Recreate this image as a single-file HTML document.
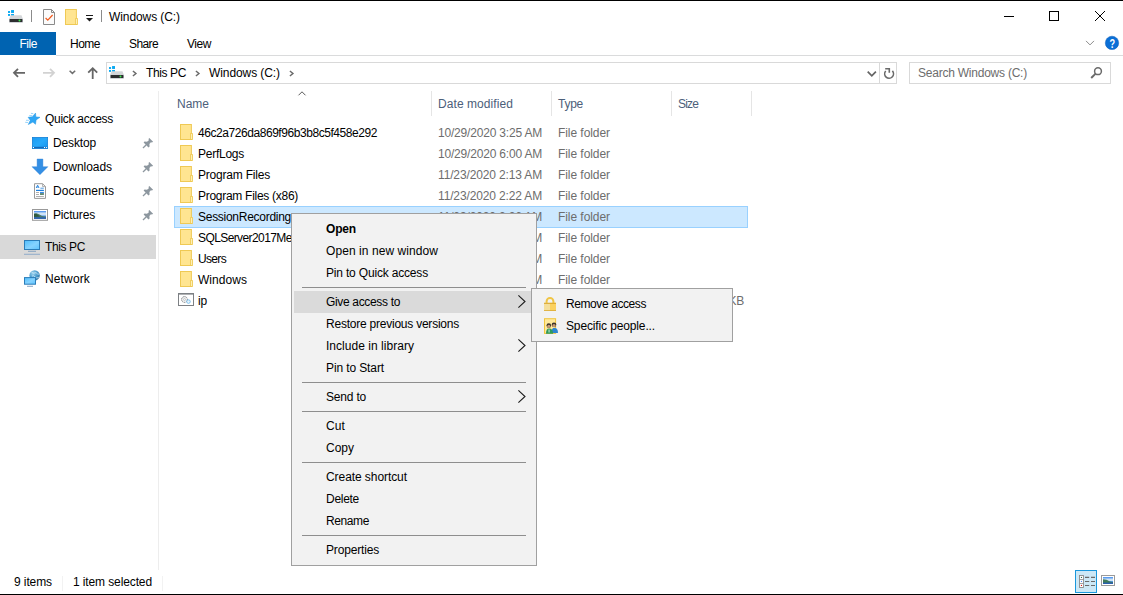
<!DOCTYPE html>
<html><head><meta charset="utf-8"><title>Windows (C:)</title>
<style>
html,body{margin:0;padding:0;}
body{width:1123px;height:595px;position:relative;overflow:hidden;background:#fff;font-family:"Liberation Sans",sans-serif;font-size:12px;}
.a{position:absolute;}
.t{position:absolute;white-space:nowrap;line-height:16px;height:16px;}
svg{position:absolute;overflow:visible;}
.hs{position:absolute;top:91px;width:1px;height:25px;background:#e5e5e5;}
.sep{position:absolute;left:302px;width:224px;height:1px;background:#8e8e8e;}
</style></head><body>
<!-- window frame lines -->
<div class="a" style="left:0;top:0;width:1123px;height:1px;background:#000;"></div>
<div class="a" style="left:0;top:594px;width:1123px;height:1px;background:#000;"></div>

<!-- title bar icons -->
<svg id="drive1" style="left:8px;top:9px" width="16" height="14" viewBox="0 0 16 14">
 <rect x="0" y="2.05" width="2.05" height="1.9" fill="#0aa9f2"/><rect x="3.05" y="1.05" width="2.95" height="2.9" fill="#0aa9f2"/>
 <rect x="0" y="5" width="2.05" height="1.9" fill="#0aa9f2"/><rect x="3.05" y="5" width="2.95" height="2.7" fill="#0aa9f2"/>
 <path d="M2.6 6.3 L13.5 6.3 L14.8 9.8 L1.2 9.8 Z" fill="#d4d6d9"/>
 <rect x="1" y="9.5" width="14" height="4.2" rx="0.8" fill="#c4c8ce"/>
 <rect x="1.6" y="9.9" width="12.8" height="3.1" rx="0.5" fill="#2c2d2f"/>
 <circle cx="11.5" cy="11.45" r="1" fill="#3dea4c"/>
</svg>
<div class="a" style="left:31px;top:10px;width:1px;height:12px;background:#8b8b8b;"></div>
<svg style="left:43px;top:9px" width="12" height="16" viewBox="0 0 12 16">
 <path d="M0.5 0.5 H8.5 L11.5 3.5 V15.5 H0.5 Z" fill="#fbfbfb" stroke="#8a8a8a" stroke-width="1"/>
 <path d="M8.5 0.5 V3.5 H11.5" fill="none" stroke="#8a8a8a" stroke-width="1"/>
 <path d="M2.6 9 L4.8 11.2 L9.6 6" fill="none" stroke="#f05a1e" stroke-width="1.2"/>
</svg>
<svg style="left:65px;top:9px" width="13" height="16" viewBox="0 0 13 16">
 <rect x="0" y="0" width="11.9" height="16" fill="#efc954"/><rect x="1" y="1" width="9.9" height="14" fill="#ffe591"/><rect x="10.1" y="8.9" width="2.85" height="7.1" rx="0.8" fill="#efc954"/><rect x="10.9" y="9.9" width="1.2" height="5.1" fill="#fff0b5"/>
</svg>
<div class="a" style="left:86px;top:15px;width:7px;height:1px;background:#1a1a1a;"></div>
<svg style="left:86px;top:18px" width="7" height="4" viewBox="0 0 7 4"><path d="M0 0 H7 L3.5 3.6 Z" fill="#1a1a1a"/></svg>
<div class="a" style="left:101px;top:10px;width:1px;height:12px;background:#8b8b8b;"></div>

<!-- window controls -->
<div class="a" style="left:1004px;top:16px;width:10px;height:1px;background:#000;"></div>
<div class="a" style="left:1049px;top:11px;width:8px;height:8px;border:1px solid #000;"></div>
<svg style="left:1095px;top:11px" width="10" height="10" viewBox="0 0 10 10"><path d="M0 0 L10 10 M10 0 L0 10" stroke="#000" stroke-width="1"/></svg>

<!-- ribbon -->
<div class="a" style="left:0;top:32px;width:56px;height:23px;background:#0063b1;"></div>
<div class="a" style="left:56px;top:55px;width:1067px;height:1px;background:#dadbdc;"></div>
<svg style="left:1086px;top:40px" width="9" height="6" viewBox="0 0 9 6"><path d="M0 0.9 L4 4.9 L8 0.9" fill="none" stroke="#8c8c8c" stroke-width="1"/></svg>
<svg style="left:1104px;top:35px" width="16" height="16" viewBox="0 0 16 16"><circle cx="8" cy="7.9" r="6.7" fill="#0b6fd6" stroke="#0a5cb8" stroke-width="0.5"/><text x="8.4" y="12.8" font-family="Liberation Sans, sans-serif" font-size="12.5" font-weight="bold" fill="#fff" text-anchor="middle" textLength="5.6" lengthAdjust="spacingAndGlyphs">?</text></svg>

<!-- nav buttons -->
<svg style="left:13px;top:68px" width="12" height="10" viewBox="0 0 12 10"><path d="M5 0.8 L1 4.8 L5 8.8 M1.2 4.8 H12" fill="none" stroke="#666666" stroke-width="1.8"/></svg>
<svg style="left:43px;top:68px" width="12" height="10" viewBox="0 0 12 10"><path d="M7 0.8 L11 4.8 L7 8.8 M10.8 4.8 H0" fill="none" stroke="#d2d2d2" stroke-width="1.8"/></svg>
<svg style="left:69px;top:70px" width="7" height="4" viewBox="0 0 7 4"><path d="M0.6 0.8 L3.4 3.4 L6.2 0.8" fill="none" stroke="#6f6f6f" stroke-width="1.5"/></svg>
<svg style="left:87px;top:67px" width="12" height="12" viewBox="0 0 12 12"><path d="M1.2 5.6 L5.7 1.2 L10.2 5.6 M5.7 1.4 V12" fill="none" stroke="#666666" stroke-width="1.8"/></svg>

<!-- address box -->
<div class="a" style="left:106px;top:62px;width:790px;height:21px;border:1px solid #d9d9d9;box-sizing:border-box;width:791px;height:22px;"></div>
<div class="a" style="left:879px;top:62px;width:1px;height:22px;background:#d9d9d9;"></div>
<svg style="left:109px;top:65px" width="16" height="14" viewBox="0 0 16 14">
 <rect x="0" y="2.05" width="2.05" height="1.9" fill="#0aa9f2"/><rect x="3.05" y="1.05" width="2.95" height="2.9" fill="#0aa9f2"/>
 <rect x="0" y="5" width="2.05" height="1.9" fill="#0aa9f2"/><rect x="3.05" y="5" width="2.95" height="2.7" fill="#0aa9f2"/>
 <path d="M2.6 6.3 L13.5 6.3 L14.8 9.8 L1.2 9.8 Z" fill="#d4d6d9"/>
 <rect x="1" y="9.5" width="14" height="4.2" rx="0.8" fill="#c4c8ce"/>
 <rect x="1.6" y="9.9" width="12.8" height="3.1" rx="0.5" fill="#2c2d2f"/>
 <circle cx="11.5" cy="11.45" r="1" fill="#3dea4c"/>
</svg>
<svg style="left:132px;top:70px" width="5" height="7" viewBox="0 0 5 7"><path d="M0.9 1.0 L3.9 3.5 L0.9 6.0" fill="none" stroke="#6a6a6a" stroke-width="1.5"/></svg>
<svg style="left:195px;top:70px" width="5" height="7" viewBox="0 0 5 7"><path d="M0.9 1.0 L3.9 3.5 L0.9 6.0" fill="none" stroke="#6a6a6a" stroke-width="1.5"/></svg>
<svg style="left:289px;top:70px" width="5" height="7" viewBox="0 0 5 7"><path d="M0.9 1.0 L3.9 3.5 L0.9 6.0" fill="none" stroke="#6a6a6a" stroke-width="1.5"/></svg>
<svg style="left:867px;top:71px" width="10" height="6" viewBox="0 0 10 6"><path d="M0.7 0.7 L4.8 4.9 L8.9 0.7" fill="none" stroke="#646464" stroke-width="1.7"/></svg>
<svg style="left:883px;top:67px" width="12" height="13" viewBox="0 0 12 13"><path d="M2.7 4.0 A4.4 4.4 0 1 0 9.4 3.9" fill="none" stroke="#6a6a6a" stroke-width="1.6"/><path d="M2.2 1.7 H6.3 V5.8" fill="none" stroke="#6a6a6a" stroke-width="1.6"/></svg>

<!-- search box -->
<div class="a" style="left:909px;top:62px;width:202px;height:22px;border:1px solid #d9d9d9;box-sizing:border-box;"></div>
<svg style="left:1090px;top:66px" width="13" height="13" viewBox="0 0 13 13"><circle cx="8" cy="5.2" r="3.4" fill="none" stroke="#6a6a6a" stroke-width="1.5"/><path d="M5.6 7.6 L1.2 12" stroke="#6a6a6a" stroke-width="2"/></svg>

<!-- nav pane -->
<div class="a" style="left:158px;top:91px;width:1px;height:479px;background:#ededed;"></div>
<div class="a" style="left:0;top:235px;width:156px;height:24px;background:#d9d9d9;"></div>
<!-- quick access star -->
<svg style="left:24px;top:112px" width="17" height="14" viewBox="0 0 17 14"><path d="M11.5 1.1 L11.9 4.9 L16 5.3 L12.1 7.9 L11.5 12.3 L8.9 10.1 L4.3 12.5 L6.3 8.3 L4.1 5.3 L8.5 4.7 Z" fill="#2ea6f5" stroke="#1f93e0" stroke-width="0.5"/><path d="M6.9 1.3 L9.3 1.7 M5.3 3.5 L8.5 3.7 M2 8.3 L4.9 8.3 M1.2 10.3 L4 10.5" stroke="#7cc8fa" stroke-width="0.8"/></svg>
<!-- desktop -->
<svg style="left:32px;top:137px" width="16" height="12" viewBox="0 0 16 12"><defs><linearGradient id="dg" x1="0" y1="0" x2="1" y2="1"><stop offset="0" stop-color="#1b9af2"/><stop offset="0.5" stop-color="#27a9fa"/><stop offset="1" stop-color="#1593ee"/></linearGradient></defs><rect x="0.4" y="0.4" width="15.2" height="11.2" fill="url(#dg)" stroke="#1580d6" stroke-width="0.8"/><rect x="0.8" y="9.8" width="14.4" height="1.4" fill="#1568b8"/><rect x="1" y="10" width="1" height="1" fill="#fff"/><rect x="12" y="10" width="1" height="1" fill="#fff"/><rect x="13.9" y="10" width="1" height="1" fill="#fff"/></svg>
<!-- downloads -->
<svg style="left:32px;top:159px" width="16" height="16" viewBox="0 0 16 16"><path d="M5.1 0 H10.9 V7.7 H15.9 L7.95 15.7 L0 7.7 H5.1 Z" fill="#348fe4" stroke="#2a7fd6" stroke-width="0.4"/></svg>
<!-- documents -->
<svg style="left:34px;top:183px" width="12" height="16" viewBox="0 0 12 16"><path d="M0.5 0.7 H8.6 L11.5 3.6 V15.4 H0.5 Z" fill="#fff" stroke="#999" stroke-width="1"/><path d="M8.6 0.7 V3.6 H11.5" fill="none" stroke="#999" stroke-width="0.8"/><path d="M2.2 5 L3.6 2.2 L5 5 M2.8 4 H4.4" fill="none" stroke="#1d7fdc" stroke-width="0.9"/><path d="M6.4 5.2 H9.8" stroke="#1d7fdc" stroke-width="0.8"/><path d="M2 7.4 H9.9" stroke="#1d7fdc" stroke-width="1.2"/><path d="M2 9.5 H5 M2 11.5 H5 M2 13.5 H9.9" stroke="#9a9a9a" stroke-width="0.8"/><rect x="6" y="8.9" width="3.9" height="1.4" fill="#3b8be8"/><rect x="6" y="10.3" width="3.9" height="1.5" fill="#3f6f52"/></svg>
<!-- pictures -->
<svg style="left:32px;top:209px" width="16" height="12" viewBox="0 0 16 12"><rect x="0.5" y="0.5" width="15" height="10.8" fill="#fff" stroke="#999" stroke-width="1"/><rect x="2" y="2" width="12" height="7.8" fill="#5b9bf0"/><rect x="2" y="3.4" width="12" height="3" fill="#cfe3f6"/><path d="M2 4.6 L4.5 4.2 L7 5.2 L10 7 L14 7.6 V9.8 H2 Z" fill="#4c7a66"/><path d="M2 5 L4 4.8 L6 6 L8 7.6 L2 8 Z" fill="#2f5a40"/><rect x="2" y="8.2" width="12" height="1.6" fill="#2c62b4"/></svg>
<!-- this pc -->
<svg style="left:24px;top:240px" width="16" height="15" viewBox="0 0 16 15"><defs><linearGradient id="pg" x1="0" y1="0" x2="1" y2="1"><stop offset="0" stop-color="#4fbdfc"/><stop offset="0.55" stop-color="#86d3ff"/><stop offset="1" stop-color="#5cc2fd"/></linearGradient></defs><rect x="0.5" y="0.5" width="15" height="9" fill="url(#pg)" stroke="#2b7db9" stroke-width="1"/><rect x="4" y="10.8" width="8" height="0.9" fill="#7b9cbd"/><rect x="0" y="13.8" width="16" height="0.9" fill="#86a6c8"/></svg>
<!-- network -->
<svg style="left:24px;top:270px" width="17" height="17" viewBox="0 0 17 17"><defs><radialGradient id="gg" cx="0.35" cy="0.3" r="0.8"><stop offset="0" stop-color="#9fd4ee"/><stop offset="0.5" stop-color="#4f9fcf"/><stop offset="1" stop-color="#2c6f9f"/></radialGradient></defs><circle cx="10.6" cy="5.4" r="5.2" fill="url(#gg)"/><path d="M7.5 2.2 Q9.5 4 12 2.6 Q13.5 4.5 15 4.2 M8 6 Q10 5 11 7 Q12.5 8.5 14.8 7.5" stroke="#cfeaf8" stroke-width="0.9" fill="none" opacity="0.85"/><rect x="0.5" y="7.6" width="11" height="6.6" fill="url(#pg)" stroke="#2b7db9" stroke-width="1"/><rect x="3" y="15.8" width="6" height="0.9" fill="#7b9cbd"/></svg>
<!-- pins -->
<svg class="pin" style="left:142px;top:137px" width="12" height="12" viewBox="0 0 12 12"><g transform="translate(0.7,0.9)"><path d="M6.6 0 L10.4 3.8 L9.3 4.7 L8.2 4.3 L6.7 6.2 L6.9 8.7 L5.8 9.5 L0.9 4.6 L1.8 3.6 L4.3 3.8 L6.2 2.3 L5.8 1 Z" fill="#8d979f"/><path d="M3.6 6.8 L0.3 10.1" stroke="#8d979f" stroke-width="1.3"/></g></svg>
<svg class="pin" style="left:142px;top:161px" width="12" height="12" viewBox="0 0 12 12"><g transform="translate(0.7,0.9)"><path d="M6.6 0 L10.4 3.8 L9.3 4.7 L8.2 4.3 L6.7 6.2 L6.9 8.7 L5.8 9.5 L0.9 4.6 L1.8 3.6 L4.3 3.8 L6.2 2.3 L5.8 1 Z" fill="#8d979f"/><path d="M3.6 6.8 L0.3 10.1" stroke="#8d979f" stroke-width="1.3"/></g></svg>
<svg class="pin" style="left:142px;top:185px" width="12" height="12" viewBox="0 0 12 12"><g transform="translate(0.7,0.9)"><path d="M6.6 0 L10.4 3.8 L9.3 4.7 L8.2 4.3 L6.7 6.2 L6.9 8.7 L5.8 9.5 L0.9 4.6 L1.8 3.6 L4.3 3.8 L6.2 2.3 L5.8 1 Z" fill="#8d979f"/><path d="M3.6 6.8 L0.3 10.1" stroke="#8d979f" stroke-width="1.3"/></g></svg>
<svg class="pin" style="left:142px;top:209px" width="12" height="12" viewBox="0 0 12 12"><g transform="translate(0.7,0.9)"><path d="M6.6 0 L10.4 3.8 L9.3 4.7 L8.2 4.3 L6.7 6.2 L6.9 8.7 L5.8 9.5 L0.9 4.6 L1.8 3.6 L4.3 3.8 L6.2 2.3 L5.8 1 Z" fill="#8d979f"/><path d="M3.6 6.8 L0.3 10.1" stroke="#8d979f" stroke-width="1.3"/></g></svg>

<!-- column headers -->
<div class="hs" style="left:431px"></div><div class="hs" style="left:551px"></div><div class="hs" style="left:671px"></div><div class="hs" style="left:751px"></div>
<svg style="left:298px;top:91px" width="8" height="5" viewBox="0 0 8 5"><path d="M0.5 4.3 L4 0.8 L7.5 4.3" fill="none" stroke="#5a5a5a" stroke-width="1"/></svg>

<!-- selected row -->
<div class="a" style="left:174px;top:206px;width:574px;height:22px;background:#cce8ff;border:1px solid #99d1ff;box-sizing:border-box;"></div>

<!-- folder icons -->
<svg style="left:180px;top:124px" width="13" height="16" viewBox="0 0 13 16"><rect x="0" y="0" width="11.9" height="16" fill="#efc954"/><rect x="1" y="1" width="9.9" height="14" fill="#ffe591"/><rect x="10.1" y="8.9" width="2.85" height="7.1" rx="0.8" fill="#efc954"/><rect x="10.9" y="9.9" width="1.2" height="5.1" fill="#fff0b5"/></svg>
<svg style="left:180px;top:145px" width="13" height="16" viewBox="0 0 13 16"><rect x="0" y="0" width="11.9" height="16" fill="#efc954"/><rect x="1" y="1" width="9.9" height="14" fill="#ffe591"/><rect x="10.1" y="8.9" width="2.85" height="7.1" rx="0.8" fill="#efc954"/><rect x="10.9" y="9.9" width="1.2" height="5.1" fill="#fff0b5"/></svg>
<svg style="left:180px;top:166px" width="13" height="16" viewBox="0 0 13 16"><rect x="0" y="0" width="11.9" height="16" fill="#efc954"/><rect x="1" y="1" width="9.9" height="14" fill="#ffe591"/><rect x="10.1" y="8.9" width="2.85" height="7.1" rx="0.8" fill="#efc954"/><rect x="10.9" y="9.9" width="1.2" height="5.1" fill="#fff0b5"/></svg>
<svg style="left:180px;top:187px" width="13" height="16" viewBox="0 0 13 16"><rect x="0" y="0" width="11.9" height="16" fill="#efc954"/><rect x="1" y="1" width="9.9" height="14" fill="#ffe591"/><rect x="10.1" y="8.9" width="2.85" height="7.1" rx="0.8" fill="#efc954"/><rect x="10.9" y="9.9" width="1.2" height="5.1" fill="#fff0b5"/></svg>
<svg style="left:180px;top:208px" width="13" height="16" viewBox="0 0 13 16"><rect x="0" y="0" width="11.9" height="16" fill="#efc954"/><rect x="1" y="1" width="9.9" height="14" fill="#ffe591"/><rect x="10.1" y="8.9" width="2.85" height="7.1" rx="0.8" fill="#efc954"/><rect x="10.9" y="9.9" width="1.2" height="5.1" fill="#fff0b5"/></svg>
<svg style="left:180px;top:229px" width="13" height="16" viewBox="0 0 13 16"><rect x="0" y="0" width="11.9" height="16" fill="#efc954"/><rect x="1" y="1" width="9.9" height="14" fill="#ffe591"/><rect x="10.1" y="8.9" width="2.85" height="7.1" rx="0.8" fill="#efc954"/><rect x="10.9" y="9.9" width="1.2" height="5.1" fill="#fff0b5"/></svg>
<svg style="left:180px;top:250px" width="13" height="16" viewBox="0 0 13 16"><rect x="0" y="0" width="11.9" height="16" fill="#efc954"/><rect x="1" y="1" width="9.9" height="14" fill="#ffe591"/><rect x="10.1" y="8.9" width="2.85" height="7.1" rx="0.8" fill="#efc954"/><rect x="10.9" y="9.9" width="1.2" height="5.1" fill="#fff0b5"/></svg>
<svg style="left:180px;top:271px" width="13" height="16" viewBox="0 0 13 16"><rect x="0" y="0" width="11.9" height="16" fill="#efc954"/><rect x="1" y="1" width="9.9" height="14" fill="#ffe591"/><rect x="10.1" y="8.9" width="2.85" height="7.1" rx="0.8" fill="#efc954"/><rect x="10.9" y="9.9" width="1.2" height="5.1" fill="#fff0b5"/></svg>
<svg style="left:178px;top:293px" width="16" height="13" viewBox="0 0 16 13"><rect x="0.5" y="0.5" width="15" height="12" fill="#fff" stroke="#7d8084" stroke-width="1"/><rect x="0.5" y="0.5" width="15" height="1.1" fill="#7d8084"/><circle cx="6.5" cy="6.5" r="2.9" fill="#f4f4f4" stroke="#74777a" stroke-width="1" stroke-dasharray="1.2 0.7"/><circle cx="6.5" cy="6.5" r="1" fill="none" stroke="#b0b3b6" stroke-width="0.6"/><circle cx="10.5" cy="8.6" r="1.8" fill="#e4f3fc" stroke="#6cb8ea" stroke-width="0.8"/></svg>

<span class="t" id="t0" style="left:109px;top:9px;color:#000;font-size:12px;letter-spacing:-0.085px;">Windows (C:)</span>
<span class="t" id="t1" style="left:19.5px;top:36px;color:#fff;font-size:12px;letter-spacing:-0.461px;">File</span>
<span class="t" id="t2" style="left:70px;top:36px;color:#000;font-size:12px;letter-spacing:-0.504px;">Home</span>
<span class="t" id="t3" style="left:129px;top:36px;color:#000;font-size:12px;letter-spacing:-0.606px;">Share</span>
<span class="t" id="t4" style="left:187px;top:36px;color:#000;font-size:12px;letter-spacing:-0.449px;">View</span>
<span class="t" id="t5" style="left:146px;top:65px;color:#000;font-size:12px;letter-spacing:-0.384px;">This PC</span>
<span class="t" id="t6" style="left:209px;top:65px;color:#000;font-size:12px;letter-spacing:-0.085px;">Windows (C:)</span>
<span class="t" id="t7" style="left:918px;top:65px;color:#6d6d6d;font-size:12px;letter-spacing:-0.230px;">Search Windows (C:)</span>
<span class="t" id="t8" style="left:45px;top:111px;color:#000;font-size:12px;letter-spacing:-0.280px;">Quick access</span>
<span class="t" id="t9" style="left:53px;top:135px;color:#000;font-size:12px;letter-spacing:-0.147px;">Desktop</span>
<span class="t" id="t10" style="left:53px;top:159px;color:#000;font-size:12px;letter-spacing:-0.042px;">Downloads</span>
<span class="t" id="t11" style="left:53px;top:183px;color:#000;font-size:12px;letter-spacing:0.033px;">Documents</span>
<span class="t" id="t12" style="left:53px;top:207px;color:#000;font-size:12px;letter-spacing:-0.170px;">Pictures</span>
<span class="t" id="t13" style="left:45px;top:239px;color:#000;font-size:12px;letter-spacing:-0.384px;">This PC</span>
<span class="t" id="t14" style="left:45px;top:271px;color:#000;font-size:12px;letter-spacing:0.141px;">Network</span>
<span class="t" id="t15" style="left:177px;top:96px;color:#4c607a;font-size:12px;letter-spacing:-0.004px;">Name</span>
<span class="t" id="t16" style="left:438px;top:96px;color:#4c607a;font-size:12px;letter-spacing:0.073px;">Date modified</span>
<span class="t" id="t17" style="left:558px;top:96px;color:#4c607a;font-size:12px;letter-spacing:-0.254px;">Type</span>
<span class="t" id="t18" style="left:678px;top:96px;color:#4c607a;font-size:12px;letter-spacing:-0.836px;">Size</span>
<span class="t" id="t19" style="left:198px;top:125px;color:#000;font-size:12px;letter-spacing:-0.440px;">46c2a726da869f96b3b8c5f458e292</span>
<span class="t" id="t20" style="left:438px;top:125px;color:#6d6d6d;font-size:12px;letter-spacing:-0.190px;">10/29/2020 3:25 AM</span>
<span class="t" id="t21" style="left:558px;top:125px;color:#6d6d6d;font-size:12px;letter-spacing:-0.062px;">File folder</span>
<span class="t" id="t22" style="left:198px;top:146px;color:#000;font-size:12px;letter-spacing:-0.254px;">PerfLogs</span>
<span class="t" id="t23" style="left:438px;top:146px;color:#6d6d6d;font-size:12px;letter-spacing:-0.190px;">10/29/2020 6:00 AM</span>
<span class="t" id="t24" style="left:558px;top:146px;color:#6d6d6d;font-size:12px;letter-spacing:-0.062px;">File folder</span>
<span class="t" id="t25" style="left:198px;top:167px;color:#000;font-size:12px;letter-spacing:-0.207px;">Program Files</span>
<span class="t" id="t26" style="left:438px;top:167px;color:#6d6d6d;font-size:12px;letter-spacing:-0.141px;">11/23/2020 2:13 AM</span>
<span class="t" id="t27" style="left:558px;top:167px;color:#6d6d6d;font-size:12px;letter-spacing:-0.062px;">File folder</span>
<span class="t" id="t28" style="left:198px;top:188px;color:#000;font-size:12px;letter-spacing:-0.282px;">Program Files (x86)</span>
<span class="t" id="t29" style="left:438px;top:188px;color:#6d6d6d;font-size:12px;letter-spacing:-0.141px;">11/23/2020 2:22 AM</span>
<span class="t" id="t30" style="left:558px;top:188px;color:#6d6d6d;font-size:12px;letter-spacing:-0.062px;">File folder</span>
<span class="t" id="t31" style="left:198px;top:209px;color:#000;font-size:12px;letter-spacing:-0.274px;">SessionRecording</span>
<span class="t" id="t32" style="left:438px;top:209px;color:#6d6d6d;font-size:12px;letter-spacing:-0.141px;">11/23/2020 2:26 AM</span>
<span class="t" id="t33" style="left:558px;top:209px;color:#6d6d6d;font-size:12px;letter-spacing:-0.062px;">File folder</span>
<span class="t" id="t34" style="left:198px;top:230px;color:#000;font-size:12px;letter-spacing:-0.596px;">SQLServer2017Media</span>
<span class="t" id="t35" style="left:438px;top:230px;color:#6d6d6d;font-size:12px;letter-spacing:-0.141px;">11/23/2020 2:30 AM</span>
<span class="t" id="t36" style="left:558px;top:230px;color:#6d6d6d;font-size:12px;letter-spacing:-0.062px;">File folder</span>
<span class="t" id="t37" style="left:198px;top:251px;color:#000;font-size:12px;letter-spacing:-0.669px;">Users</span>
<span class="t" id="t38" style="left:438px;top:251px;color:#6d6d6d;font-size:12px;letter-spacing:-0.190px;">10/29/2020 2:40 AM</span>
<span class="t" id="t39" style="left:558px;top:251px;color:#6d6d6d;font-size:12px;letter-spacing:-0.062px;">File folder</span>
<span class="t" id="t40" style="left:198px;top:272px;color:#000;font-size:12px;letter-spacing:0.045px;">Windows</span>
<span class="t" id="t41" style="left:438px;top:272px;color:#6d6d6d;font-size:12px;letter-spacing:-0.141px;">11/23/2020 2:50 AM</span>
<span class="t" id="t42" style="left:558px;top:272px;color:#6d6d6d;font-size:12px;letter-spacing:-0.062px;">File folder</span>
<span class="t" id="t43" style="left:198px;top:293px;color:#000;font-size:12px;letter-spacing:-0.172px;">ip</span>
<span class="t" id="t44" style="left:438px;top:293px;color:#6d6d6d;font-size:12px;letter-spacing:-0.141px;">11/23/2020 3:00 AM</span>
<span class="t" id="t45" style="left:558px;top:293px;color:#6d6d6d;font-size:12px;letter-spacing:-0.004px;">Text Document</span>
<span class="t" id="t46" style="left:719px;top:293px;color:#6d6d6d;font-size:12px;letter-spacing:-0.254px;">1 KB</span>
<span class="t" id="t47" style="left:14px;top:574px;color:#000;font-size:12px;letter-spacing:-0.098px;">9 items</span>
<span class="t" id="t48" style="left:73px;top:574px;color:#000;font-size:12px;letter-spacing:-0.115px;">1 item selected</span>

<!-- status bar icons -->
<div class="a" style="left:62px;top:576px;width:1px;height:15px;background:#f2f2f2;"></div><div class="a" style="left:162px;top:576px;width:1px;height:15px;background:#f2f2f2;"></div>
<div class="a" style="left:1075px;top:570px;width:22px;height:23px;box-sizing:border-box;border:1px solid #1a97dc;background:#cce8f6;"></div>
<svg style="left:1079px;top:575px" width="16" height="13" viewBox="0 0 16 13">
 <rect x="0.5" y="0.5" width="3.9" height="12" fill="#fff" stroke="#8a8a8a" stroke-width="0.9"/>
 <path d="M0.5 4.5 H4.4 M0.5 8.5 H4.4" stroke="#8a8a8a" stroke-width="0.8"/>
 <rect x="1.9" y="1.9" width="1.1" height="1.1" fill="#2f6b4a"/><rect x="1.9" y="5.9" width="1.1" height="1.1" fill="#4f86f0"/><rect x="1.9" y="9.9" width="1.1" height="1.1" fill="#d81e1e"/>
 <path d="M6 2.4 H10.2 M12 2.4 H16 M6 6.5 H10.2 M12 6.5 H16 M6 10.5 H10.2 M12 10.5 H16" stroke="#6a6a6a" stroke-width="1.1"/>
</svg>
<svg style="left:1101px;top:575px" width="14" height="11" viewBox="0 0 14 11"><rect x="0.5" y="0.5" width="13" height="10" fill="#fff" stroke="#9a9a9a" stroke-width="1"/><rect x="2" y="2" width="10" height="7" fill="#5a9cf0"/><rect x="2" y="3.5" width="10" height="2.5" fill="#cfe4f7"/><path d="M2 4.2 L5.5 4.8 L9 6.5 L12 7 V9 H2 Z" fill="#3f7a5a"/><rect x="2" y="7.6" width="10" height="1.4" fill="#2a5fb0"/></svg>

<!-- context menu -->
<div class="a" style="left:291px;top:213px;width:246px;height:353px;box-sizing:border-box;background:#f2f2f2;border:1px solid #a0a0a0;"></div>
<div class="a" style="left:294px;top:291px;width:240px;height:22px;background:#dadada;"></div>
<div class="sep" style="top:287px"></div>
<div class="sep" style="top:382px"></div>
<div class="sep" style="top:411px"></div>
<div class="sep" style="top:462px"></div>
<div class="sep" style="top:535px"></div>
<svg style="left:518px;top:295px" width="8" height="13" viewBox="0 0 8 13"><path d="M0.4 0.3 L7 6.5 L0.4 12.7" fill="none" stroke="#1c1c1c" stroke-width="1.1"/></svg>
<svg style="left:518px;top:339px" width="8" height="13" viewBox="0 0 8 13"><path d="M0.4 0.3 L7 6.5 L0.4 12.7" fill="none" stroke="#1c1c1c" stroke-width="1.1"/></svg>
<svg style="left:518px;top:390px" width="8" height="13" viewBox="0 0 8 13"><path d="M0.4 0.3 L7 6.5 L0.4 12.7" fill="none" stroke="#1c1c1c" stroke-width="1.1"/></svg>

<!-- submenu -->
<div class="a" style="left:531px;top:288px;width:202px;height:54px;box-sizing:border-box;background:#f2f2f2;border:1px solid #a0a0a0;"></div>
<svg style="left:544px;top:296px" width="12" height="15" viewBox="0 0 12 15"><path d="M2.6 7 V5.3 A3.4 3.4 0 0 1 9.4 5.3 V7" fill="none" stroke="#f0c545" stroke-width="2"/><rect x="0" y="6.8" width="6" height="8" fill="#f5df9c"/><rect x="6" y="6.8" width="6" height="8" fill="#fbd160"/><rect x="0" y="6.8" width="12" height="1" fill="#d9a428"/><rect x="0" y="14" width="12" height="0.8" fill="#dba92f"/></svg>
<svg style="left:544px;top:318px" width="15" height="16" viewBox="0 0 15 16"><rect x="0" y="0.2" width="12.1" height="15.7" fill="#f0c53c"/><rect x="1" y="1.2" width="10.1" height="13.7" fill="#ffe89a"/><path d="M7.4 14.9 Q7.5 9.8 10.5 9.8 Q14 10 14 14.9 Z" fill="#2f86d0"/><circle cx="10" cy="6.8" r="2.3" fill="#3a3228"/><circle cx="10" cy="7.5" r="1.6" fill="#c99a72"/><path d="M2 15.7 Q2 10.5 5 10.5 Q9 10.5 9.1 15.7 Z" fill="#2e9a5d"/><rect x="4.6" y="11.5" width="0.9" height="3" fill="#e8f2ea"/><circle cx="4.8" cy="7.6" r="2.3" fill="#3a3228"/><circle cx="4.8" cy="8.3" r="1.6" fill="#c99a72"/></svg>

<span class="t" id="t49" style="left:326px;top:221px;color:#000;font-size:12px;font-weight:bold;letter-spacing:-0.168px;">Open</span>
<span class="t" id="t50" style="left:326px;top:243px;color:#000;font-size:12px;letter-spacing:0.070px;">Open in new window</span>
<span class="t" id="t51" style="left:326px;top:265px;color:#000;font-size:12px;letter-spacing:-0.178px;">Pin to Quick access</span>
<span class="t" id="t52" style="left:326px;top:294px;color:#000;font-size:12px;letter-spacing:-0.336px;">Give access to</span>
<span class="t" id="t53" style="left:326px;top:316px;color:#000;font-size:12px;letter-spacing:-0.229px;">Restore previous versions</span>
<span class="t" id="t54" style="left:326px;top:338px;color:#000;font-size:12px;letter-spacing:0.035px;">Include in library</span>
<span class="t" id="t55" style="left:326px;top:360px;color:#000;font-size:12px;letter-spacing:-0.115px;">Pin to Start</span>
<span class="t" id="t56" style="left:326px;top:389px;color:#000;font-size:12px;letter-spacing:-0.196px;">Send to</span>
<span class="t" id="t57" style="left:326px;top:418px;color:#000;font-size:12px;letter-spacing:0.104px;">Cut</span>
<span class="t" id="t58" style="left:326px;top:440px;color:#000;font-size:12px;letter-spacing:-0.004px;">Copy</span>
<span class="t" id="t59" style="left:326px;top:469px;color:#000;font-size:12px;letter-spacing:-0.070px;">Create shortcut</span>
<span class="t" id="t60" style="left:326px;top:491px;color:#000;font-size:12px;letter-spacing:-0.281px;">Delete</span>
<span class="t" id="t61" style="left:326px;top:513px;color:#000;font-size:12px;letter-spacing:-0.393px;">Rename</span>
<span class="t" id="t62" style="left:326px;top:542px;color:#000;font-size:12px;letter-spacing:-0.170px;">Properties</span>
<span class="t" id="t63" style="left:566px;top:296px;color:#000;font-size:12px;letter-spacing:-0.413px;">Remove access</span>
<span class="t" id="t64" style="left:566px;top:318px;color:#000;font-size:12px;letter-spacing:-0.133px;">Specific people...</span>
</body></html>
